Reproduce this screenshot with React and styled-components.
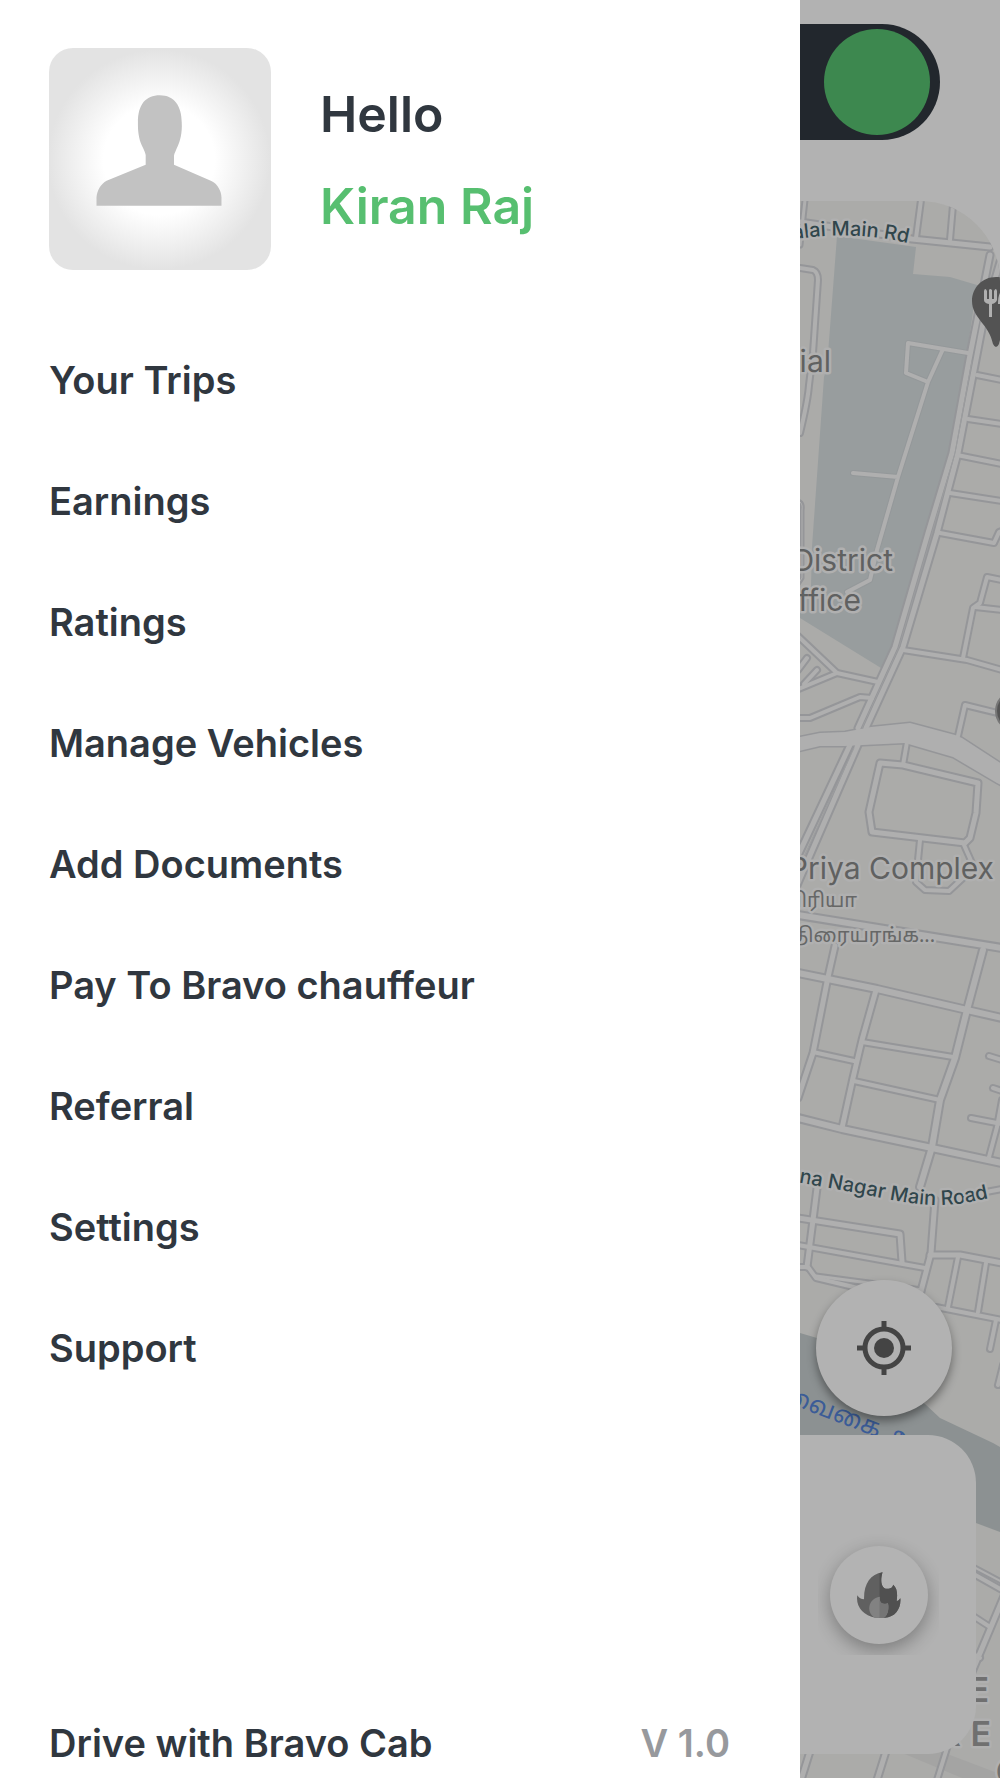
import styled, { createGlobalStyle } from "styled-components";

const GlobalStyle = createGlobalStyle`
  * {
    box-sizing: border-box;
  }
  body {
    margin: 0;
    background: #b2b2b2;
    font-family: "Century Gothic", "Inter", sans-serif;
  }
`;

const Screen = styled.div`
  display: flex;
  min-height: 100vh;
  overflow: hidden;
`;

const Drawer = styled.aside`
  flex: 0 0 80%;
  display: flex;
  flex-direction: column;
  padding: 48px 49px 11px;
  background: #ffffff;
  color: #30373f;
`;

const Profile = styled.header`
  display: flex;
  align-items: center;
  gap: 49px;
`;

const Avatar = styled.svg`
  width: 222px;
  height: 222px;
  border-radius: 24px;
  flex-shrink: 0;
`;

const Greeting = styled.div`
  display: flex;
  flex-direction: column;
  gap: 36px;
  padding-top: 2px;
  font-size: 50px;
  line-height: 56px;
  font-weight: 600;
`;

const Hello = styled.p`
  margin: 0;
`;

const UserName = styled.h1`
  margin: 0;
  font-size: inherit;
  font-weight: inherit;
  color: #57bf70;
`;

const Menu = styled.ul`
  display: flex;
  flex-direction: column;
  gap: 73px;
  margin: 86px 0 0;
  padding: 0;
  list-style: none;
`;

const MenuLink = styled.a`
  display: block;
  font-size: 38px;
  line-height: 48px;
  font-weight: 600;
  color: inherit;
  text-decoration: none;
`;

const DrawerFooter = styled.footer`
  display: flex;
  justify-content: space-between;
  margin-top: auto;
  padding-right: 21px;
  font-size: 38px;
  line-height: 48px;
  font-weight: 600;
`;

const Version = styled.span`
  color: #97999d;
`;

const Home = styled.main`
  flex: 1;
  min-width: 0;
  display: flex;
  flex-direction: column;
`;

const TopBar = styled.div`
  padding: 24px 60px 61px 0;
`;

const Toggle = styled.label`
  display: flex;
  justify-content: flex-end;
  padding: 5px 10px 5px 0;
  border-radius: 0 58px 58px 0;
  background: #22272d;
`;

const ToggleInput = styled.input`
  appearance: none;
  width: 106px;
  height: 106px;
  margin: 0;
  border-radius: 50%;
  background: #3d884f;
`;

const MapArea = styled.section`
  flex: 1;
  position: relative;
  display: flex;
  flex-direction: column;
  justify-content: flex-end;
  gap: 19px;
  padding: 0 24px 24px 0;
  border-top-right-radius: 80px;
  overflow: hidden;
`;

const MapDrawing = styled.svg`
  position: absolute;
  inset: 0;
  width: 100%;
  height: 100%;
`;

const LocateButton = styled.button`
  position: relative;
  align-self: center;
  margin-right: 8px;
  display: flex;
  align-items: center;
  justify-content: center;
  width: 136px;
  height: 136px;
  padding: 0;
  border: 0;
  border-radius: 50%;
  background: #b2b2b2;
  box-shadow: 0 5px 10px rgba(0, 0, 0, 0.4);
`;

const StatusCard = styled.div`
  position: relative;
  padding: 99px 0 99px 18px;
  border-radius: 0 48px 48px 0;
  background: #b2b2b2;
`;

const HeatSlot = styled.div`
  display: flex;
  align-items: center;
  justify-content: center;
  width: 121px;
  height: 121px;
  overflow: hidden;
`;

const HeatButton = styled.button`
  display: flex;
  align-items: center;
  justify-content: center;
  width: 98px;
  height: 98px;
  padding: 0;
  border: 0;
  border-radius: 50%;
  background: #b3b3b3;
  box-shadow: 0 6px 18px rgba(0, 0, 0, 0.3);
`;

const menuItems = [
  "Your Trips",
  "Earnings",
  "Ratings",
  "Manage Vehicles",
  "Add Documents",
  "Pay To Bravo chauffeur",
  "Referral",
  "Settings",
  "Support",
];

// [path, width of the road surface]
const roads = [
  ["M800 222L912 239L990 247", 5],
  ["M921 200L916 238", 4],
  ["M953 205L950 240", 4],
  ["M805 200L800 245", 3],
  ["M800 268L813 270Q818 272 818 280L813 353L809 385Q808 400 800 433", 4],
  ["M800 502Q803 504 802 510V578L798 584", 1],
  ["M990 255L975 330L969 360L952 453L928 533L895 647L858 728", 5],
  ["M1000 262L985 313L976 360L958 453L937 533L903 647L866 728", 5],
  ["M850 745L795 862", 5],
  ["M858 745L795 890", 5],
  ["M977 375L1002 380", 4],
  ["M968 419L1002 424", 4],
  ["M957 455L1002 464", 4],
  ["M950 493L1002 501", 4],
  ["M940 533L994 543L999 532L1004 530", 4],
  ["M1002 580L987 577L980 603L973 608L963 658", 4],
  ["M975 607L1002 610", 4],
  ["M903 650L967 660L1002 670", 4],
  ["M798 636L837 673L878 682", 4],
  ["M837 673L796 690", 4],
  ["M807 658L798 670", 4],
  ["M817 670L804 684", 4],
  ["M798 718L810 718L860 697L872 698", 4],
  ["M958 736L965 705L1002 714", 4],
  ["M907 742L903 765", 4],
  ["M880 763L903 765L978 783L976 813L970 838L965 843L872 832L869 812Z", 5],
  ["M920 840L918 860L916 882L925 890L949 891L963 878L972 863L964 845", 4],
  ["M798 915L1002 948", 6],
  ["M835 946L828 977L813 1053L798 1098", 5],
  ["M798 973L877 989L967 1010L1002 1018", 6],
  ["M876 990L862 1040L853 1078L842 1128", 5],
  ["M983 950L967 1010L955 1058L940 1100L932 1147L920 1187", 6],
  ["M813 1052L854 1061", 4],
  ["M862 1042L953 1057", 4],
  ["M854 1081L940 1100", 4],
  ["M798 1118L842 1129L932 1148L1002 1163", 6],
  ["M989 1056L1002 1060", 4],
  ["M993 1088L1002 1091", 4],
  ["M971 1118L1002 1124", 4],
  ["M1002 1100L997 1127L989 1157", 4],
  ["M986 1192L1002 1189", 4],
  ["M818 1180L813 1220L807 1267", 5],
  ["M798 1267L808 1267L816 1278L862 1289", 4],
  ["M816 1276L922 1290", 3],
  ["M798 1218L900 1234L902 1262", 5],
  ["M798 1245L925 1268", 4],
  ["M935 1200L931 1253L920 1295", 5],
  ["M930 1255L960 1255L1002 1263", 5],
  ["M958 1257L948 1307", 4],
  ["M986 1263L978 1312", 4],
  ["M936 1307L1002 1320", 4],
  ["M996 1320L990 1349", 4],
  ["M1003 1365L998 1385", 4],
  ["M970 1565L1002 1582", 2],
  ["M970 1572L1002 1590", 4],
  ["M970 1614L990 1627", 4],
  ["M1004 1596L972 1672", 5],
  ["M970 1652L980 1658", 4],
  ["M812 1745L801 1780", 5],
  ["M888 1745L877 1780", 5],
  ["M948 1745L937 1780", 4],
];

const campusPaths =
  "M943 349L928 382L898 477L877 550L870 580L847 592M853 473L898 477M968 353L908 343L906 373L928 382";

const avenue =
  "M795 738L820 733L845 732L871 727L910 723L955 735L962 738L1005 766V787L997 783L953 757L905 743L863 745L845 746L820 746L795 752Z";

const placeStyle = { fontFamily: "Inter, sans-serif", fontSize: 30, fill: "#606161" };
const tamilStyle = {
  fontFamily: '"Noto Sans Tamil", "Noto Sans", sans-serif',
  fontSize: 20,
  fill: "#666767",
};
const roadNameStyle = {
  fontFamily: "Inter, sans-serif",
  fontSize: 20,
  fontWeight: 500,
  fill: "#30464c",
};

const CityMap = () => (
  <MapDrawing viewBox="800 201 200 1577" preserveAspectRatio="xMinYMin slice" aria-label="Map">
    <defs>
      <path id="alai-main" d="M750 250Q830 225 908 243" />
      <path id="nagar-main" d="M760 1176L830 1188C870 1195 910 1205 935 1205S970 1202 989 1198" />
    </defs>
    <rect x="800" y="201" width="200" height="1577" fill="#ababa9" />
    <path
      d="M837 236L916 247L913 274L950 277L977 285L963 380L950 450L895 647L881 668L800 618V592L811 586L812 547L824 377L827 367Z"
      fill="#989d9e"
    />
    <path
      d="M800 1333L817 1338L860 1360L925 1404L940 1418L993 1443L1000 1447V1532L976 1523L800 1470Z"
      fill="#8c9192"
    />
    <path d="M900 1752H942L1000 1774V1778H962Z" fill="#a4a4a3" />
    <g fill="none" strokeLinecap="round" strokeLinejoin="round">
      <path d={campusPaths} stroke="#94989a" strokeWidth="6" />
      {roads.map(([d, w]) => (
        <path key={d} d={d} stroke="#959699" strokeWidth={w + 4} />
      ))}
      <path d={avenue} fill="#afafaf" stroke="#959699" strokeWidth="3" />
      {roads.map(([d, w]) => (
        <path key={d} d={d} stroke="#afafaf" strokeWidth={w} />
      ))}
      <path d={campusPaths} stroke="#afafaf" strokeWidth="4" />
      <path d={avenue} fill="#afafaf" />
      <path
        d="M972 361L955 453L932 533L899 647L862 728M854 748L800 865"
        stroke="#9c9d9f"
        strokeWidth="1"
      />
    </g>
    <g stroke="#b0b0b0" strokeWidth="5" strokeLinejoin="round" paintOrder="stroke" textAnchor="end">
      <text {...roadNameStyle}>
        <textPath href="#alai-main" startOffset="100%">
          alai Main Rd
        </textPath>
      </text>
      <text {...roadNameStyle}>
        <textPath href="#nagar-main" startOffset="100%">
          na Nagar Main Road
        </textPath>
      </text>
      <text x="831" y="372" {...placeStyle}>ial</text>
      <text x="893" y="571" {...placeStyle}>District</text>
      <text x="861" y="611" {...placeStyle}>ffice</text>
      <text x="994" y="879" {...placeStyle}>Priya Complex</text>
      <text x="857" y="907" {...tamilStyle}>பிரியா</text>
      <text x="935" y="942" {...tamilStyle}>திரையரங்க...</text>
      <text x="989" y="1702" {...placeStyle} fontSize="34" fontWeight="600" fill="#707070">E</text>
      <text x="991" y="1746" {...placeStyle} fontSize="34" fontWeight="600" fill="#707070">E</text>
      <text x="961" y="1746" {...placeStyle} fontSize="34" fontWeight="600" fill="#707070">R</text>
      <text x="1022" y="1784" {...placeStyle} fontSize="34" fontWeight="600" fill="#707070">O</text>
    </g>
    <text {...tamilStyle} fontSize="25" fill="#3b5c97" transform="translate(780 1400) rotate(21)">
      வைகை ஆறு
    </text>
    <path
      d="M996 277C1011 277 1021 288 1021 301C1021 318 1003 324 999 344Q996 350 993 344C989 324 972 318 972 301C972 288 982 277 996 277Z"
      fill="#535353"
    />
    <path
      d="M984 291Q985 287 987 291V299H989V290Q990 288 992 290V299H994V291Q996 287 997 291V300Q996 303 992 304V317H989V304Q984 303 984 300Z"
      fill="#b0b0b0"
    />
    <path d="M1004 317V289Q998 291 998 304H1001V317Z" fill="#b0b0b0" />
    <circle cx="1016" cy="711" r="20" fill="#555" stroke="#777" strokeWidth="2" />
  </MapDrawing>
);

const Silhouette = () => (
  <Avatar viewBox="53 55 659 666" preserveAspectRatio="none" role="img" aria-label="Profile photo">
    <defs>
      <radialGradient id="glow" gradientUnits="userSpaceOnUse" cx="380" cy="390" r="330">
        <stop offset="0.5" stopColor="#ffffff" />
        <stop offset="0.75" stopColor="#f1f1f1" />
        <stop offset="1" stopColor="#e3e3e3" />
      </radialGradient>
    </defs>
    <rect x="53" y="55" width="659" height="666" fill="url(#glow)" />
    <path
      d="M317 278C317 225 340 197 382 197C425 197 447 230 447 278C449 310 442 335 435 350C430 362 425 372 424 378V405L535 454C553 462 565 485 565 503V528H194V503C196 482 207 462 224 453L340 405V376C337 360 325 345 321 325C317 305 317 295 317 278Z"
      fill="#c2c2c2"
    />
  </Avatar>
);

const LocateIcon = () => (
  <svg width="54" height="54" viewBox="0 0 54 54" fill="none" stroke="#444444" aria-hidden="true">
    <circle cx="27" cy="27" r="19" strokeWidth="5" />
    <circle cx="27" cy="27" r="10" fill="#444444" stroke="none" />
    <path d="M27 0V7M27 47V54M0 27H7M47 27H54" strokeWidth="5" />
  </svg>
);

const FlameIcon = () => (
  <svg width="44" height="46" viewBox="230 219 131 137" aria-hidden="true">
    <path
      d="M306 220C297 250 305 270 320 269C332 269 336 264 338 257C350 268 351 285 348 306Q355 304 359 297C362 325 345 355 312 355H285C248 350 225 320 231 288Q238 300 251 300C250 255 270 225 306 220Z"
      fill="#606060"
    />
    <path
      d="M297 223L306 220C297 250 305 270 320 269C332 269 336 264 338 257C350 268 351 285 348 306Q355 304 359 297C362 325 345 355 312 355H297Z"
      fill="#505050"
    />
    <path
      d="M298 293C297 310 303 314 312 314Q319 314 322 311C327 332 319 350 310 355H282C258 340 261 300 298 293Z"
      fill="#828282"
    />
    <path d="M297 302C299 314 312 316 322 311C327 332 319 350 310 355H297Z" fill="#757575" />
  </svg>
);

export const App = () => {
  return (
    <>
      <GlobalStyle />
      <Screen>
        <Drawer>
          <Profile>
            <Silhouette />
            <Greeting>
              <Hello>Hello</Hello>
              <UserName>Kiran Raj</UserName>
            </Greeting>
          </Profile>
          <nav>
            <Menu>
              {menuItems.map((item) => (
                <li key={item}>
                  <MenuLink href="#">{item}</MenuLink>
                </li>
              ))}
            </Menu>
          </nav>
          <DrawerFooter>
            <span>Drive with Bravo Cab</span>
            <Version>V 1.0</Version>
          </DrawerFooter>
        </Drawer>
        <Home>
          <TopBar>
            <Toggle>
              <ToggleInput type="checkbox" role="switch" aria-label="Online" defaultChecked />
            </Toggle>
          </TopBar>
          <MapArea>
            <CityMap />
            <LocateButton aria-label="My location">
              <LocateIcon />
            </LocateButton>
            <StatusCard>
              <HeatSlot>
                <HeatButton aria-label="Heat map">
                  <FlameIcon />
                </HeatButton>
              </HeatSlot>
            </StatusCard>
          </MapArea>
        </Home>
      </Screen>
    </>
  );
};
export default App;
